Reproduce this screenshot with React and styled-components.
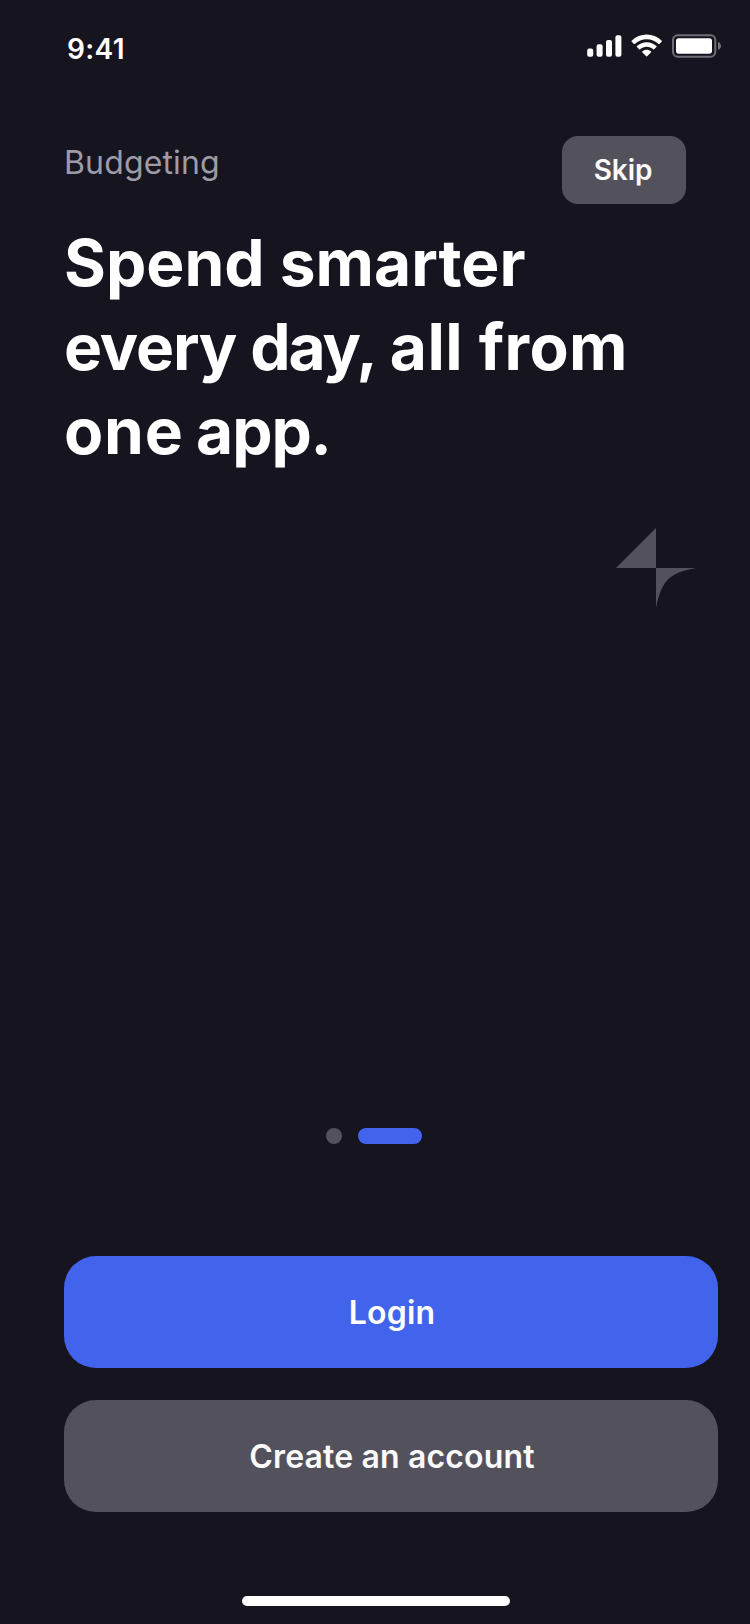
import React from "react";
import styled, { createGlobalStyle } from "styled-components";

const GlobalStyle = createGlobalStyle`
  *, *::before, *::after { box-sizing: border-box; }
  body { margin: 0; background: #16141f; }
`;

const Screen = styled.main`
  display: flex;
  flex-direction: column;
  width: 750px;
  height: 1624px;
  background: #16141f;
  color: #fff;
  font-family: Inter, "Liberation Sans", sans-serif;
  overflow: hidden;
`;

const StatusBar = styled.header`
  display: flex;
  justify-content: space-between;
  height: 136px;
  padding: 31px 28px 0 67px;
`;

const Clock = styled.time`
  margin-top: 1px;
  font-size: 28px;
  line-height: 34px;
  font-weight: 560;
  letter-spacing: 0.35px;
`;

const StatusIcons = styled.svg`
  display: block;
  width: 136px;
  height: 26px;
  margin-top: 2px;
`;

const Intro = styled.section`
  display: flex;
  flex-direction: column;
  height: 392px;
  padding: 0 64px;
`;

const IntroTop = styled.div`
  display: flex;
  justify-content: space-between;
  align-items: flex-start;
  height: 85px;
`;

const Eyebrow = styled.p`
  margin: 7px 0 0;
  color: #9e9ba8;
  font-size: 32px;
  line-height: 40px;
  letter-spacing: 0.15px;
`;

const SkipButton = styled.button`
  width: 124px;
  height: 68px;
  padding: 0 2px 0 0;
  border: 0;
  border-radius: 16px;
  background: #53525c;
  color: #fafafa;
  font: 560 28px/34px Inter, "Liberation Sans", sans-serif;
  letter-spacing: -0.1px;
`;

const Title = styled.h1`
  margin: 0;
  font-size: 64px;
  line-height: 84px;
  font-weight: 700;
  white-space: nowrap;
`;

const Line = styled.span`
  display: block;
`;

const Word = styled.span`
  letter-spacing: ${({ $track = 0 }) => $track}px;
  word-spacing: ${({ $gap = 0 }) => $gap}px;
`;

const Artwork = styled.section`
  display: flex;
  justify-content: flex-end;
  align-items: flex-start;
  height: 600px;
  padding-right: 54px;
`;

const Spark = styled.svg`
  display: block;
  width: 80px;
  height: 80px;
  fill: #53525c;
`;

const Pager = styled.nav`
  display: flex;
  gap: 16px;
  height: 128px;
  padding-left: 326px;
`;

const Dot = styled.span`
  width: ${({ $active }) => ($active ? 64 : 16)}px;
  height: 16px;
  border-radius: 8px;
  background: ${({ $active }) => ($active ? "#4263eb" : "#53525c")};
`;

const Actions = styled.section`
  display: flex;
  flex-direction: column;
  gap: 32px;
  padding: 0 32px 0 64px;
`;

const ActionButton = styled.button`
  height: 112px;
  padding: 2px 0 0 2px;
  border: 0;
  border-radius: 32px;
  background: ${({ $primary }) => ($primary ? "#4263eb" : "#53525c")};
  color: ${({ $primary }) => ($primary ? "#fff" : "#fafafa")};
  font: 560 32px/40px Inter, "Liberation Sans", sans-serif;
  letter-spacing: 0.15px;
`;

const HomeIndicator = styled.div`
  width: 268px;
  height: 10px;
  margin: 84px 0 0 242px;
  border-radius: 5px;
  background: #fff;
`;

export default function App() {
  return (
    <>
      <GlobalStyle />
      <Screen>
        <StatusBar>
          <Clock>9:41</Clock>
          <StatusIcons viewBox="586 33 136 26" fill="#fff" aria-hidden="true">
            <rect x="587.2" y="48.6" width="6" height="8.1" rx="2" />
            <rect x="596.6" y="44.3" width="6" height="12.4" rx="2" />
            <rect x="606" y="39.9" width="6" height="16.8" rx="2" />
            <rect x="615.4" y="35.2" width="6" height="21.5" rx="2" />
            <g transform="translate(631.4 34.6) scale(2)">
              <path d="M7.637 2.277C9.853 2.277 11.984 3.129 13.59 4.656C13.711 4.774 13.904 4.772 14.023 4.652L15.179 3.486C15.239 3.425 15.273 3.343 15.272 3.257C15.272 3.172 15.237 3.09 15.176 3.03C10.961 -1.01 4.311 -1.01 .096 3.03C.035 3.09 0 3.171 0 3.257C0 3.343 .033 3.425 .093 3.486L1.25 4.652C1.369 4.772 1.562 4.774 1.683 4.656C3.289 3.129 5.42 2.277 7.637 2.277Z" />
              <path d="M7.637 6.073C8.854 6.073 10.028 6.525 10.931 7.343C11.053 7.459 11.245 7.456 11.364 7.337L12.519 6.17C12.579 6.109 12.613 6.026 12.612 5.94C12.612 5.854 12.576 5.771 12.514 5.711C9.766 3.155 5.51 3.155 2.761 5.711C2.699 5.771 2.664 5.854 2.663 5.94C2.663 6.026 2.696 6.109 2.757 6.17L3.912 7.337C4.031 7.456 4.223 7.459 4.345 7.343C5.247 6.526 6.42 6.074 7.637 6.073Z" />
              <path d="M9.95 8.627C9.951 8.714 9.918 8.797 9.856 8.858L7.859 10.874C7.8 10.933 7.72 10.966 7.637 10.966C7.554 10.966 7.474 10.933 7.415 10.874L5.418 8.858C5.356 8.797 5.323 8.714 5.325 8.627C5.326 8.541 5.364 8.459 5.428 8.401C6.703 7.32 8.572 7.32 9.846 8.401C9.91 8.459 9.948 8.541 9.95 8.627Z" />
            </g>
            <rect x="673" y="35.3" width="42.3" height="21.4" rx="4.6" fill="none" stroke="#fff" strokeOpacity=".38" strokeWidth="2" />
            <rect x="676" y="38.3" width="36" height="15.4" rx="2.7" />
            <path d="M718 42V50C719.7 49.4 721 47.8 721 46C721 44.2 719.7 42.6 718 42Z" opacity=".42" />
          </StatusIcons>
        </StatusBar>

        <Intro>
          <IntroTop>
            <Eyebrow>Budgeting</Eyebrow>
            <SkipButton type="button">Skip</SkipButton>
          </IntroTop>
          <Title>
            <Line>Spend smarter</Line>
            <Line>
              <Word $track={-1.13}>every </Word>
              <Word $track={-2.1} $gap={3}>day, </Word>
              <Word $track={0.45}>all </Word>
              <Word $track={0.4}>from</Word>
            </Line>
            <Line>
              <Word $track={0.8} $gap={-3.5}>one </Word>
              <Word $track={-1.1}>app.</Word>
            </Line>
          </Title>
        </Intro>

        <Artwork>
          <Spark viewBox="0 0 80 80" aria-hidden="true">
            <path d="M0 40L40 0V40Z" />
            <path d="M40 40H80C54 45 46 51 40 80Z" />
          </Spark>
        </Artwork>

        <Pager aria-label="Onboarding steps">
          <Dot />
          <Dot $active />
        </Pager>

        <Actions>
          <ActionButton type="button" $primary>Login</ActionButton>
          <ActionButton type="button">Create an account</ActionButton>
        </Actions>
        <HomeIndicator />
      </Screen>
    </>
  );
}
